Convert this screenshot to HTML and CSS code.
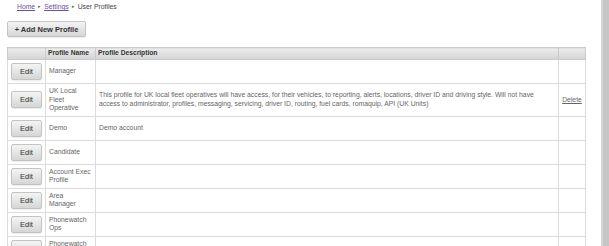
FILE: index.html
```html
<!DOCTYPE html>
<html>
<head>
<meta charset="utf-8">
<title>User Profiles</title>
<link rel="stylesheet" href="styles.css">
</head>
<body>
<div class="page">
  <div class="main">
    <div class="crumbs"><a href="#">Home</a><span class="sep">&#9656;</span><a href="#">Settings</a><span class="sep">&#9656;</span>User Profiles</div>
    <div class="toolbar"><button class="btn btn-add">+ Add New Profile</button></div>
    <table class="profiles">
      <colgroup>
        <col class="c-edit"><col class="c-name"><col class="c-desc"><col class="c-del">
      </colgroup>
      <thead>
        <tr><th></th><th>Profile Name</th><th>Profile Description</th><th></th></tr>
      </thead>
      <tbody>
        <tr><td class="ed"><button class="btn btn-edit">Edit</button></td><td>Manager</td><td></td><td></td></tr>
        <tr><td class="ed"><button class="btn btn-edit">Edit</button></td><td>UK Local Fleet Operative</td><td>This profile for UK local fleet operatives will have access, for their vehicles, to reporting, alerts, locations, driver ID and driving style. Will not have access to administrator, profiles, messaging, servicing, driver ID, routing, fuel cards, romaquip, API (UK Units)</td><td class="del"><a href="#">Delete</a></td></tr>
        <tr><td class="ed"><button class="btn btn-edit">Edit</button></td><td>Demo</td><td>Demo account</td><td></td></tr>
        <tr><td class="ed"><button class="btn btn-edit">Edit</button></td><td>Candidate</td><td></td><td></td></tr>
        <tr><td class="ed"><button class="btn btn-edit">Edit</button></td><td>Account Exec Profile</td><td></td><td></td></tr>
        <tr><td class="ed"><button class="btn btn-edit">Edit</button></td><td>Area Manager</td><td></td><td></td></tr>
        <tr><td class="ed"><button class="btn btn-edit">Edit</button></td><td>Phonewatch Ops</td><td></td><td></td></tr>
        <tr><td class="ed"><button class="btn btn-edit">Edit</button></td><td>Phonewatch Admin</td><td></td><td></td></tr>
        <tr><td class="ed"><button class="btn btn-edit">Edit</button></td><td>Driver</td><td></td><td></td></tr>
      </tbody>
    </table>
  </div>
  <div class="rail"></div>
</div>
</body>
</html>
```
FILE: styles.css
```css
html, body {
  margin: 0;
  padding: 0;
  background: #fff;
}
body {
  font-family: "Liberation Sans", Arial, sans-serif;
  color: #555;
}
.page {
  display: flex;
  height: 246px;
  overflow: hidden;
}
.main {
  width: 601px;
  flex: none;
  padding-left: 7px;
  box-sizing: border-box;
}
.rail {
  width: 8px;
  flex: none;
  background: linear-gradient(to right, #d6d6d6 0, #d6d6d6 2px, #c6c6c6 2px);
}
.crumbs {
  height: 12px;
  line-height: 12px;
  padding-left: 10px;
  font-size: 6.8px;
  color: #444;
}
.crumbs a {
  color: #6b4fa3;
  text-decoration: underline;
}
.crumbs .sep {
  display: inline-block;
  margin: 0 3px;
  font-size: 5px;
  color: #666;
  vertical-align: 1px;
}
.toolbar {
  margin-top: 9px;
  display: flex;
}
.btn {
  font-family: "Liberation Sans", Arial, sans-serif;
  border: 1px solid #c4c4c4;
  border-radius: 2px;
  background: linear-gradient(to bottom, #f4f4f4, #d6d6d6);
  color: #333;
  padding: 0;
  margin: 0;
  box-shadow: 0 1px 1px rgba(0,0,0,0.08);
}
.btn-add {
  width: 79px;
  height: 16px;
  font-size: 7.5px;
  font-weight: bold;
}
.profiles {
  margin-top: 10px;
  width: 578px;
  table-layout: fixed;
  border-collapse: collapse;
  border: 1px solid #cfcfcf;
  font-size: 6.8px;
  line-height: 8.5px;
  color: #666;
}
.c-edit { width: 38px; }
.c-name { width: 50px; }
.c-desc { width: 463px; }
.c-del { width: 27px; }
.profiles th {
  height: 12px;
  padding: 0 2px;
  box-sizing: border-box;
  text-align: left;
  font-weight: bold;
  font-size: 6.7px;
  color: #333;
  background: linear-gradient(to bottom, #ececec, #d4d4d4);
  border: 1px solid #cacaca;
}
.profiles td {
  padding: 3px 3px;
  border: 1px solid #dcdcdc;
  vertical-align: middle;
}
.profiles td.ed {
  padding: 3px 2px;
  text-align: center;
}
.btn-edit {
  width: 31px;
  height: 17px;
  font-size: 7.5px;
  display: block;
  margin: 0 auto;
}
.profiles td.del {
  text-align: center;
  padding: 3px 1px;
}
.profiles td.del a {
  color: #666;
  text-decoration: underline;
}
```
